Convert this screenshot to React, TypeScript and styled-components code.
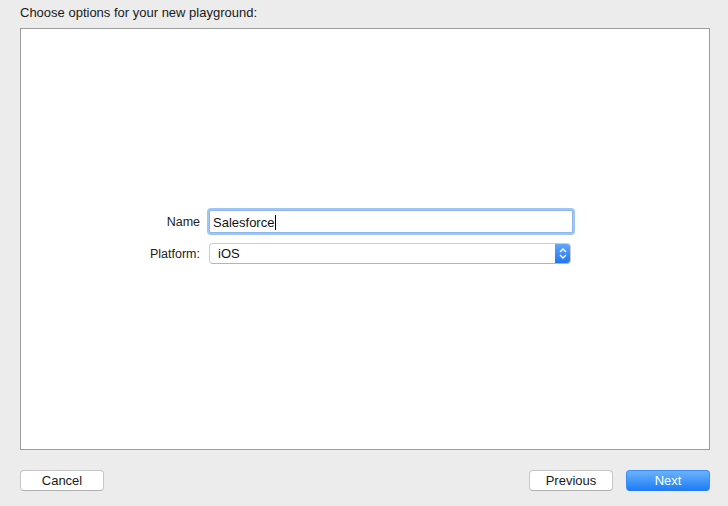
import React from "react";
import styled, { createGlobalStyle } from "styled-components";

const Global = createGlobalStyle`
  html, body { margin: 0; padding: 0; background: #ececec; }
  body { font-family: "Liberation Sans", Arial, sans-serif; color: #1e1e1e; }
`;

const Page = styled.div`
  width: 728px;
  height: 506px;
  box-sizing: border-box;
  padding: 5px 18px 0 20px;
  display: flex;
  flex-direction: column;
`;

const Title = styled.div`
  font-size: 13px;
  line-height: 16px;
  color: #1a1a1a;
  margin-bottom: 7px;
`;

const Panel = styled.div`
  height: 422px;
  box-sizing: border-box;
  border: 1px solid #9c9c9c;
  background: #ffffff;
  display: flex;
  align-items: center;
`;

const Form = styled.div`
  display: grid;
  grid-template-columns: 179px 364px;
  column-gap: 9px;
  row-gap: 10px;
  align-items: center;
  margin-top: -4px;
`;

const Label = styled.div`
  font-size: 12.5px;
  text-align: right;
  color: #222;
`;

const TextField = styled.div`
  height: 23px;
  width: 364px;
  box-sizing: border-box;
  border: 1px solid #8eb6ec;
  border-radius: 2px;
  box-shadow: 0 0 0 2px #9fc5f6;
  background: #fff;
  display: flex;
  align-items: center;
  padding: 1px 0 0 3px;
  font-size: 13px;
  color: #111;
`;

const Caret = styled.span`
  display: inline-block;
  width: 1px;
  height: 15px;
  background: #000;
  margin-left: 1px;
`;

const Select = styled.div`
  height: 21px;
  width: 362px;
  box-sizing: border-box;
  border: 1px solid #cdcdcd;
  border-bottom-color: #b4b4b4;
  border-radius: 4px;
  background: #fff;
  display: flex;
  align-items: stretch;
  overflow: hidden;
  font-size: 13px;
`;

const SelectText = styled.div`
  flex: 1;
  display: flex;
  align-items: center;
  padding-left: 8px;
  color: #111;
`;

const Stepper = styled.div`
  width: 16px;
  background: linear-gradient(#64aaf9, #1c74f3);
  display: flex;
  align-items: center;
  justify-content: center;
  margin: -1px -1px -1px 0;
`;

const Footer = styled.div`
  display: flex;
  align-items: center;
  margin-top: 20px;
  gap: 13px;
`;

const Spacer = styled.div`
  flex: 1;
`;

const Button = styled.button<{ $primary?: boolean; $w: number }>`
  width: ${(p) => p.$w}px;
  height: 21px;
  box-sizing: border-box;
  border-radius: 4px;
  font-family: "Liberation Sans", Arial, sans-serif;
  font-size: 13px;
  padding: 0;
  border: 1px solid ${(p) => (p.$primary ? "#3b8df5" : "#c6c6c6")};
  border-bottom-color: ${(p) => (p.$primary ? "#2a79ee" : "#b0b0b0")};
  background: ${(p) => (p.$primary ? "linear-gradient(#6db2fa, #1b7ef9)" : "#ffffff")};
  color: ${(p) => (p.$primary ? "#ffffff" : "#1a1a1a")};
`;

export default function App() {
  return (
    <>
      <Global />
      <Page>
        <Title>Choose options for your new playground:</Title>
        <Panel>
          <Form>
            <Label>Name</Label>
            <TextField>
              Salesforce
              <Caret />
            </TextField>
            <Label>Platform:</Label>
            <Select>
              <SelectText>iOS</SelectText>
              <Stepper>
                <svg width="8" height="13" viewBox="0 0 8 13">
                  <path d="M1 5 L4 2 L7 5" fill="none" stroke="#fff" strokeWidth="1.4" />
                  <path d="M1 8 L4 11 L7 8" fill="none" stroke="#fff" strokeWidth="1.4" />
                </svg>
              </Stepper>
            </Select>
          </Form>
        </Panel>
        <Footer>
          <Button $w={84}>Cancel</Button>
          <Spacer />
          <Button $w={84}>Previous</Button>
          <Button $w={84} $primary>
            Next
          </Button>
        </Footer>
      </Page>
    </>
  );
}
